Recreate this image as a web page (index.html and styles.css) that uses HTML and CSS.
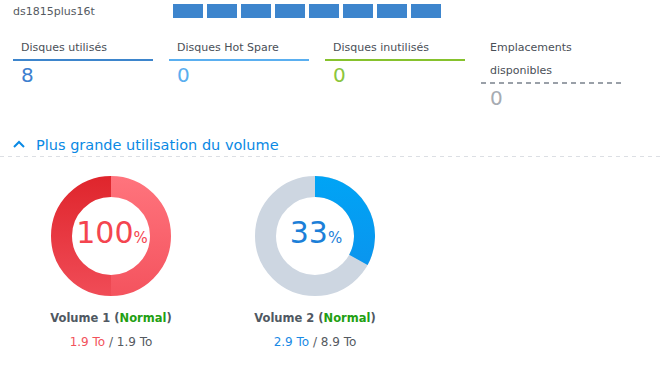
FILE: index.html
```html
<!DOCTYPE html>
<html lang="fr">
<head>
    <meta charset="UTF-8">
    <meta name="viewport" content="width=device-width, initial-scale=1.0">
    <title>Gestionnaire de stockage</title>
    <link rel="stylesheet" href="styles.css">
</head>
<body>
    <!-- Server name and disk bays -->
    <div class="header">
        <div class="server-name">ds1815plus16t</div>
        <div class="bays">
            <span class="bay"></span>
            <span class="bay"></span>
            <span class="bay"></span>
            <span class="bay"></span>
            <span class="bay"></span>
            <span class="bay"></span>
            <span class="bay"></span>
            <span class="bay"></span>
        </div>
    </div>

    <!-- Disk counters -->
    <div class="stats">
        <div class="stat stat-used">
            <div class="stat-label">Disques utilisés</div>
            <div class="stat-value">8</div>
        </div>
        <div class="stat stat-spare">
            <div class="stat-label">Disques Hot Spare</div>
            <div class="stat-value">0</div>
        </div>
        <div class="stat stat-unused">
            <div class="stat-label">Disques inutilisés</div>
            <div class="stat-value">0</div>
        </div>
        <div class="stat stat-free">
            <div class="stat-label">Emplacements disponibles</div>
            <div class="stat-value">0</div>
        </div>
    </div>

    <!-- Volume usage -->
    <div class="section-head">
        <svg class="chevron" width="12" height="8" viewBox="0 0 12 8">
            <polyline points="1,7 6,2 11,7" fill="none" stroke="#0a8ae5" stroke-width="2"/>
        </svg>
        <span>Plus grande utilisation du volume</span>
    </div>

    <div class="volumes">
        <div class="vol">
            <div class="donut">
                <svg width="120" height="120" viewBox="0 0 120 120">
                    <defs>
                        <linearGradient id="redLeft" gradientUnits="userSpaceOnUse" x1="0" y1="0" x2="0" y2="120">
                            <stop offset="0" stop-color="#df252c"/>
                            <stop offset="1" stop-color="#f04c57"/>
                        </linearGradient>
                        <linearGradient id="redRight" gradientUnits="userSpaceOnUse" x1="0" y1="0" x2="0" y2="120">
                            <stop offset="0" stop-color="#ff747d"/>
                            <stop offset="1" stop-color="#f4535e"/>
                        </linearGradient>
                    </defs>
                    <path d="M60 10.5 A49.5 49.5 0 0 0 60 109.5" fill="none" stroke="url(#redLeft)" stroke-width="21"/>
                    <path d="M60 10.5 A49.5 49.5 0 0 1 60 109.5" fill="none" stroke="url(#redRight)" stroke-width="21"/>
                </svg>
                <div class="pct pct-red"><span>100<small>%</small></span></div>
            </div>
            <div class="vol-name">Volume 1 (<span class="ok">Normal</span>)</div>
            <div class="vol-size"><span class="used-red">1.9 To</span> / 1.9 To</div>
        </div>
        <div class="vol">
            <div class="donut">
                <svg width="120" height="120" viewBox="0 0 120 120">
                    <defs>
                        <linearGradient id="blueArc" gradientUnits="userSpaceOnUse" x1="0" y1="0" x2="0" y2="120">
                            <stop offset="0" stop-color="#00a4f5"/>
                            <stop offset="1" stop-color="#0d90ec"/>
                        </linearGradient>
                    </defs>
                    <circle cx="60" cy="60" r="49.5" fill="none" stroke="#cdd6e1" stroke-width="21"/>
                    <path d="M60 10.5 A49.5 49.5 0 0 1 103.38 83.85" fill="none" stroke="url(#blueArc)" stroke-width="21"/>
                </svg>
                <div class="pct pct-blue"><span>33<small>%</small></span></div>
            </div>
            <div class="vol-name">Volume 2 (<span class="ok">Normal</span>)</div>
            <div class="vol-size"><span class="used-blue">2.9 To</span> / 8.9 To</div>
        </div>
    </div>
</body>
</html>
```

FILE: styles.css
```css
body {
    margin: 0;
    font-family: "DejaVu Sans", Verdana, sans-serif;
    font-size: 11px;
    color: #4a4f57;
    background: #fff;
}

/* Header */
.header {
    display: flex;
    align-items: flex-start;
    padding: 4px 13px 0;
    height: 18px;
}

.server-name {
    width: 160px;
    padding-top: 1px;
    line-height: 14px;
    color: #555a61;
}

.bays {
    display: flex;
    gap: 4px;
}

.bay {
    width: 30px;
    height: 14px;
    background-color: #3d85cd;
}

/* Counters */
.stats {
    display: flex;
    gap: 16px;
    padding: 0 13px;
    margin-top: 14px;
    align-items: flex-start;
}

.stat {
    width: 140px;
}

.stat-label {
    padding-left: 8px;
    line-height: 23px;
    border-bottom: 2px solid #3d85cc;
}

.stat-value {
    padding-left: 8px;
    margin-top: 2px;
    font-size: 20px;
    line-height: 24px;
}

.stat-used .stat-value { color: #3d80cf; }

.stat-spare .stat-label { border-bottom-color: #5aaff0; }
.stat-spare .stat-value { color: #5aaeef; }

.stat-unused .stat-label { border-bottom-color: #86c22d; }
.stat-unused .stat-value { color: #8cc63c; }

.stat-free .stat-label {
    padding: 0 20px 2px 9px;
    border-bottom: none;
    background: repeating-linear-gradient(90deg, #9aa0a8 0 5px, transparent 5px 9px) left bottom / 100% 2px no-repeat;
}

.stat-free .stat-value {
    padding-left: 9px;
    color: #a6abb2;
}

/* Section title */
.section-head {
    display: flex;
    align-items: center;
    height: 25px;
    margin-top: 22px;
    padding-left: 13px;
    font-size: 14.5px;
    color: #0a89e4;
    background: repeating-linear-gradient(90deg, #dcdfe4 0 4px, transparent 4px 8px) left bottom / 100% 1px no-repeat;
}

.chevron {
    margin-right: 11px;
    margin-top: -1px;
}

/* Volumes */
.volumes {
    display: flex;
    padding-left: 9px;
    margin-top: 19px;
}

.vol {
    width: 204px;
    display: flex;
    flex-direction: column;
    align-items: center;
}

.donut {
    position: relative;
    width: 120px;
    height: 120px;
}

.donut svg {
    display: block;
}

.pct {
    position: absolute;
    inset: 0;
    display: flex;
    align-items: center;
    justify-content: center;
    padding: 0 0 2px 2px;
    font-size: 30px;
    line-height: 30px;
}

.pct small {
    font-size: 15px;
}

.pct-red { color: #f4454f; }
.pct-blue { color: #1c7fd8; }

.vol-name {
    margin-top: 14px;
    font-size: 11.5px;
    line-height: 16px;
    font-weight: bold;
    color: #505862;
}

.ok { color: #22a012; }

.vol-size {
    margin-top: 8px;
    font-size: 12px;
    line-height: 16px;
    color: #555a61;
}

.used-red { color: #f2525b; }
.used-blue { color: #1a8ae5; }
```
